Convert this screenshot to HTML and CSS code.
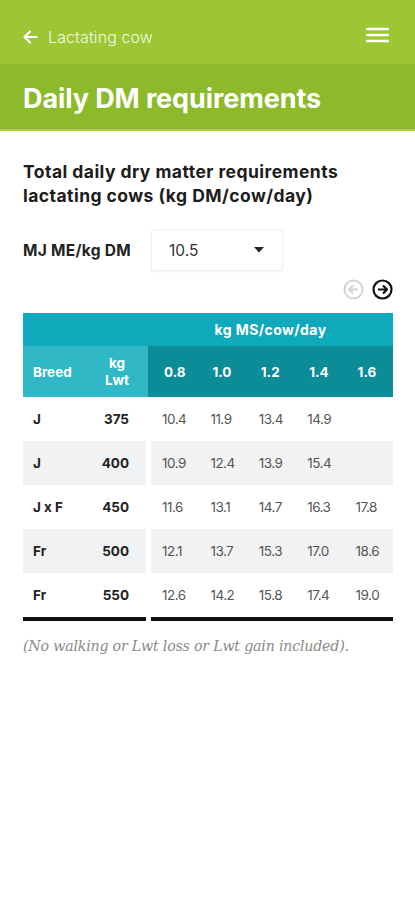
FILE: index.html
```html
<!DOCTYPE html>
<html>
<head>
<meta charset="utf-8">
<link rel="stylesheet" href="styles.css">
</head>
<body>
<header class="topbar">
  <div class="back">
    <svg class="back-icon" width="16" height="16" viewBox="0 0 16 16"><path d="M14.5 8H2.5M8 2.5L2.5 8L8 13.5" fill="none" stroke="#fff" stroke-width="2.2" stroke-linecap="round" stroke-linejoin="round"/></svg>
    <span class="back-label">Lactating cow</span>
  </div>
  <svg class="menu" width="23" height="16" viewBox="0 0 23 16"><path d="M1 2H22M1 8H22M1 14H22" stroke="#fff" stroke-width="2.4" stroke-linecap="round"/></svg>
</header>
<div class="titlebar"><h1>Daily DM requirements</h1></div>
<main class="content">
  <h2>Total daily dry matter requirements lactating cows (kg DM/cow/day)</h2>
  <div class="picker">
    <span class="picker-label">MJ ME/kg DM</span>
    <div class="select"><span>10.5</span><svg width="10" height="6" viewBox="0 0 10 6"><path d="M0 0H10L5 5.5Z" fill="#222"/></svg></div>
  </div>
  <div class="pager">
    <svg width="21" height="21" viewBox="0 0 21 21"><circle cx="10.5" cy="10.5" r="9" fill="none" stroke="#d4d4d4" stroke-width="2"/><path d="M15 10.5H6.5M10 6.5L6 10.5L10 14.5" fill="none" stroke="#d4d4d4" stroke-width="2" stroke-linejoin="round"/></svg>
    <svg width="21" height="21" viewBox="0 0 21 21"><circle cx="10.5" cy="10.5" r="9" fill="none" stroke="#111" stroke-width="2.2"/><path d="M6 10.5H14.5M11 6.5L15 10.5L11 14.5" fill="none" stroke="#111" stroke-width="2.2" stroke-linejoin="round"/></svg>
  </div>
  <div class="table">
    <div class="head1"><span class="h1-left"></span><span class="h1-right">kg MS/cow/day</span></div>
    <div class="head2">
      <div class="h2-left"><span class="c-breed">Breed</span><span class="c-lwt-h">kg<br>Lwt</span></div>
      <div class="h2-right"><span>0.8</span><span>1.0</span><span>1.2</span><span>1.4</span><span>1.6</span></div>
    </div>
    <div class="row"><div class="left"><span class="c-breed">J</span><span class="c-lwt">375</span></div><div class="right"><span>10.4</span><span>11.9</span><span>13.4</span><span>14.9</span><span></span></div></div>
    <div class="row alt"><div class="left"><span class="c-breed">J</span><span class="c-lwt">400</span></div><div class="right"><span>10.9</span><span>12.4</span><span>13.9</span><span>15.4</span><span></span></div></div>
    <div class="row"><div class="left"><span class="c-breed">J x F</span><span class="c-lwt">450</span></div><div class="right"><span>11.6</span><span>13.1</span><span>14.7</span><span>16.3</span><span>17.8</span></div></div>
    <div class="row alt"><div class="left"><span class="c-breed">Fr</span><span class="c-lwt">500</span></div><div class="right"><span>12.1</span><span>13.7</span><span>15.3</span><span>17.0</span><span>18.6</span></div></div>
    <div class="row last"><div class="left"><span class="c-breed">Fr</span><span class="c-lwt">550</span></div><div class="right"><span>12.6</span><span>14.2</span><span>15.8</span><span>17.4</span><span>19.0</span></div></div>
  </div>
  <p class="note">(No walking or Lwt loss or Lwt gain included).</p>
</main>
</body>
</html>
```
FILE: styles.css
```css
* { box-sizing: border-box; }
body { margin: 0; font-family: Inter, "Open Sans", sans-serif; background: #fff; color: #222; }
.topbar { height: 64px; background: #9cc633; display: flex; align-items: center; justify-content: space-between; padding: 9px 26px 0 22px; }
.back { display: flex; align-items: center; gap: 10px; }
.back-icon { display: block; }
.back-label { color: #f4f9e6; font-size: 16px; font-weight: 300; letter-spacing: 0.1px; }
.menu { display: block; margin-top: -4px; }
.titlebar { height: 67px; background: #8cba2a; border-bottom: 2px solid #a9d045; display: flex; align-items: center; padding: 3px 23px 0; }
h1 { margin: 0; color: #fff; font-size: 27px; font-weight: 700; letter-spacing: -0.1px; }
.content { padding: 29px 22px 0 23px; }
h2 { margin: 0; font-size: 17.5px; font-weight: 700; line-height: 24px; color: #1c1c1c; width: 360px; letter-spacing: 0.45px; }
.picker { display: flex; align-items: center; margin-top: 21px; }
.picker-label { font-size: 15.5px; font-weight: 700; width: 128px; letter-spacing: 0.3px; }
.select { width: 132px; height: 42px; border: 1px solid #eeeeee; border-radius: 3px; box-shadow: 0 1px 2px rgba(0,0,0,0.06); display: flex; align-items: center; justify-content: space-between; padding: 0 18px 0 17px; font-size: 15.5px; color: #333; }
.pager { display: flex; justify-content: flex-end; gap: 8px; margin-top: 8px; }
.pager svg { display: block; }
.table { margin-top: 13px; width: 370px; font-size: 13.5px; }
.head1 { height: 33px; background: #10a9bb; display: flex; align-items: center; color: #fff; font-weight: 700; }
.h1-left { width: 125px; }
.h1-right { flex: 1; text-align: center; font-size: 14px; letter-spacing: 0.4px; }
.head2 { height: 51px; display: flex; color: #fff; font-weight: 700; }
.h2-left { width: 125px; background: #30b8c7; display: flex; align-items: center; }
.h2-right { flex: 1; background: #0c8b98; display: grid; grid-template-columns: repeat(5, 1fr); align-items: center; padding-left: 3px; }
.h2-right span { padding-left: 13px; }
.c-breed { width: 73px; padding-left: 10px; font-weight: 700; }
.c-lwt-h { width: 50px; text-align: center; line-height: 17px; padding-right: 8px; }
.row { height: 44px; display: flex; gap: 5px; }
.row .left { width: 123px; display: flex; align-items: center; font-weight: 700; color: #222; }
.row .right { flex: 1; display: grid; grid-template-columns: repeat(5, 1fr); align-items: center; color: #555; }
.row .right span { padding-left: 11px; letter-spacing: -0.5px; }
.c-lwt { width: 50px; text-align: right; padding-right: 17px; }
.row.alt .left, .row.alt .right { background: #f1f2f3; }
.row.last .left, .row.last .right { border-bottom: 4px solid #111; }
.row.last { height: 48px; }
.note { margin: 17px 0 0; font-family: "DejaVu Serif", serif; font-style: italic; font-size: 14.2px; color: #8a8a8a; letter-spacing: -0.2px; }
```
